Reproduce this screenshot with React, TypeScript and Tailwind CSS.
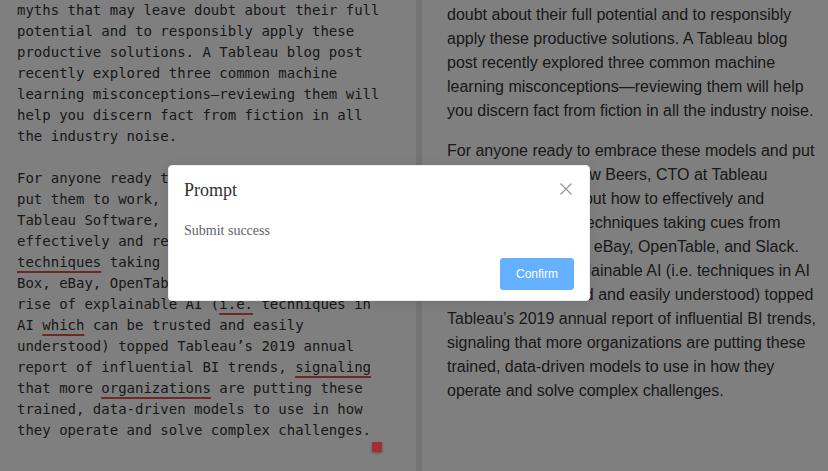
import React from "react";

const editorParagraphs = [
  <>
    myths that may leave doubt about their full potential and to responsibly apply these productive
    solutions. A Tableau blog post recently explored three common machine learning misconceptions—reviewing
    them will help you discern fact from fiction in all the industry noise.
  </>,
  <>
    For anyone ready to embrace these models and put them to work, Andrew Beers, CTO at Tableau Software,
    spoke about how to effectively and responsibly use AI <Typo>techniques</Typo> taking cues from companies
    like Box, eBay, OpenTable, and Slack. Plus, the rise of explainable AI (<Typo>i.e.</Typo> techniques in AI{" "}
    <Typo>which</Typo> can be trusted and easily understood) topped Tableau’s 2019 annual report of
    influential BI trends, <Typo>signaling</Typo> that more <Typo>organizations</Typo> are putting these
    trained, data-driven models to use in how they operate and solve complex challenges.
  </>,
];

function Typo({ children }: { children: React.ReactNode }) {
  return (
    <span className="underline decoration-[#d9534f] decoration-2 underline-offset-[4px]">{children}</span>
  );
}

const previewParagraphs = [
  "doubt about their full potential and to responsibly apply these productive solutions. A Tableau blog post recently explored three common machine learning misconceptions—reviewing them will help you discern fact from fiction in all the industry noise.",
  "For anyone ready to embrace these models and put them to work, Andrew Beers, CTO at Tableau Software, spoke about how to effectively and responsibly use AI techniques taking cues from companies like Box, eBay, OpenTable, and Slack. Plus, the rise of explainable AI (i.e. techniques in AI which can be trusted and easily understood) topped Tableau’s 2019 annual report of influential BI trends, signaling that more organizations are putting these trained, data-driven models to use in how they operate and solve complex challenges.",
];

const MessageBox = ({ title, message }: { title: string; message: string }) => {
  return (
    <div className="absolute left-[168px] top-[165px] z-20 w-[422px] rounded-[4px] border border-[#ebeef5] bg-white pb-[10px] shadow-[0_2px_12px_rgba(0,0,0,0.1)] font-['Liberation_Serif',serif]">
      <div className="relative px-[15px] pt-[15px] pb-[10px]">
        <div className="text-[18px] leading-[18px] text-[#303133]">{title}</div>
        <button className="absolute right-[15px] top-[15px] h-4 w-4 text-[#909399]">
          <svg className="h-4 w-4" viewBox="0 0 16 16" fill="none" stroke="currentColor" strokeWidth={1.1}>
            <path d="M2.5 2.5l11 11M13.5 2.5l-11 11" />
          </svg>
        </button>
      </div>
      <div className="px-[15px] py-[10px] text-[14px] leading-[24px] text-[#606266]">{message}</div>
      <div className="flex justify-end px-[15px] pt-[5px]">
        <button className="rounded-[3px] border border-[#66b1ff] bg-[#66b1ff] px-[15px] py-[9px] font-['Liberation_Sans',Arial,sans-serif] text-[12px] leading-[12px] text-white">
          Confirm
        </button>
      </div>
    </div>
  );
};

export default function App() {
  return (
    <main className="relative flex h-[471px] w-full overflow-hidden bg-white">
      {/* editor */}
      <div className="w-[416px] shrink-0 pl-[17px] font-['DejaVu_Sans_Mono',monospace] text-[14px] leading-[21px] text-[#333]">
        <div className="w-[375px]">
          {editorParagraphs.map((p, i) => (
            <p key={i} className="mb-[21px]">
              {p}
            </p>
          ))}
        </div>
      </div>

      <div className="w-[6px] shrink-0 bg-[#e8e8e8]" />

      {/* preview */}
      <div className="flex-1 pl-[25px] pt-[3px] font-['Liberation_Sans',Arial,sans-serif] text-[16px] leading-[24px] text-[#333]">
        <div className="w-[375px]">
          {previewParagraphs.map((p, i) => (
            <p key={i} className="mb-[16px]">
              {p}
            </p>
          ))}
        </div>
      </div>

      <div className="absolute inset-0 z-10 bg-black/50" />

      <MessageBox title="Prompt" message="Submit success" />

      <div className="absolute left-[372px] top-[442px] z-30 h-[10px] w-[10px] rounded-[1px] bg-[#a33030] shadow-[0_1px_3px_rgba(0,0,0,0.35)]" />
    </main>
  );
}
